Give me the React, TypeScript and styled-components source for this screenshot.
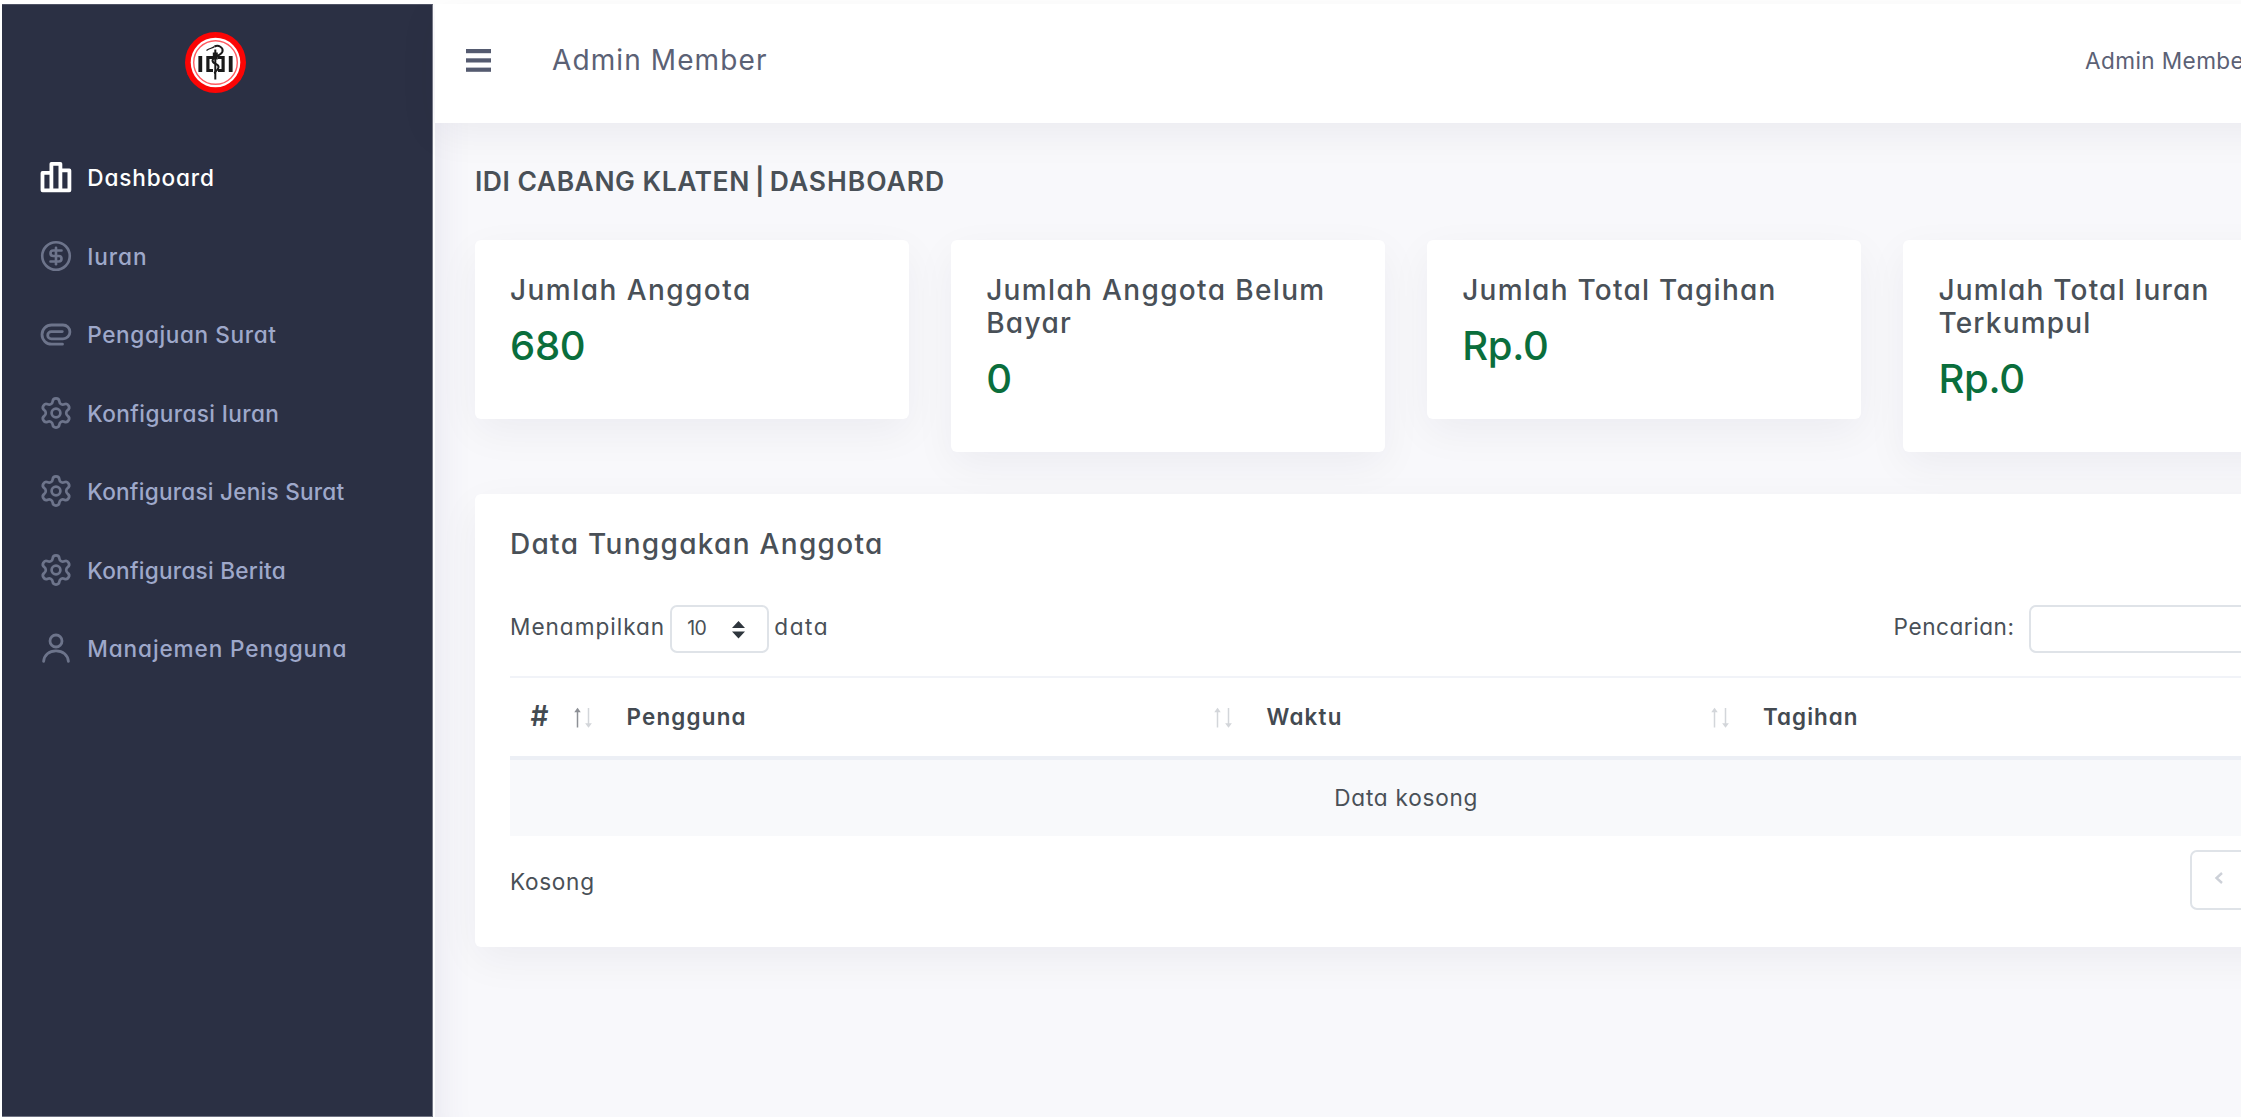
import React from "react";
import styled, { createGlobalStyle } from "styled-components";
import { CircleDollarSign, Settings } from "lucide-react";

const GlobalStyle = createGlobalStyle`
  *, *::before, *::after { box-sizing: border-box; }
  body {
    margin: 0;
    overflow: hidden;
    background: #fff;
    color: #495057;
    font-family: Inter, "Open Sans", sans-serif;
    font-feature-settings: "cv11";
    font-size: 22.6px;
  }
  h1, h2, h3, p { margin: 0; }
`;

const Page = styled.div`
  display: flex;
  width: 2241px;
  height: 1118px;
  padding: 4px 0 1px 2px;
  overflow: hidden;
`;

const Sidebar = styled.aside`
  flex: none;
  width: 431px;
  background: #2b3044;
  border-right: 1px solid #747786;
  border-bottom: 1px solid #6f7282;
  border-top: 1px solid #4f5365;
`;

const Brand = styled.div`
  display: flex;
  justify-content: center;
  height: 134px;
  padding: 27px 3px 0 0;
`;

const Menu = styled.nav`
  display: flex;
  flex-direction: column;
`;

const MenuItem = styled.a<{ $active?: boolean }>`
  display: flex;
  align-items: center;
  gap: 12.3px;
  height: 78.5px;
  padding: 0 0 1px 35px;
  color: ${(p) => (p.$active ? "#ffffff" : "#9ea8ca")};
  font-weight: 500;

  svg {
    flex: none;
    margin-top: -1px;
    color: ${(p) => (p.$active ? "#ffffff" : "#6d748b")};
  }
`;

const Label = styled.span<{ $track: number }>`
  letter-spacing: ${(p) => p.$track}px;
  white-space: nowrap;
`;

const Main = styled.main`
  display: flex;
  flex: none;
  flex-direction: column;
  width: 1945.5px;
  background: #f8f8fb;
  border-left: 2px solid #fdfdfe;
  box-shadow: inset 40px 0 36px -38px rgba(70, 60, 130, 0.1);
`;

const Topbar = styled.header`
  display: flex;
  align-items: center;
  flex: none;
  height: 118.5px;
  padding: 0 128.5px 6px 30.5px;
  background: #fff;
  color: #5b6175;
  box-shadow: 0 10px 42px rgba(18, 22, 50, 0.06);
`;

const TopTitle = styled.div`
  margin-left: 61px;
  font-size: 28px;
  letter-spacing: 1.1px;
  line-height: 36px;
`;

const Profile = styled.div`
  width: 165px;
  margin-left: auto;
  letter-spacing: 0.4px;
  white-space: nowrap;
`;

const Content = styled.div`
  display: flex;
  flex-direction: column;
  padding: 41px 41px 0 40px;
`;

const PageTitle = styled.h1`
  margin-bottom: 42px;
  color: #495057;
  font-size: 26.5px;
  font-weight: 600;
  line-height: 34px;
  white-space: pre;
`;

const TitleDivider = styled.span`
  word-spacing: -1.4px;
`;

const Stats = styled.div`
  display: grid;
  grid-template-columns: repeat(4, 1fr);
  align-items: start;
  gap: 42px;
  margin-bottom: 41.5px;
`;

const Card = styled.section`
  background: #fff;
  border-radius: 6px;
  box-shadow: 0 13px 42px rgba(18, 22, 50, 0.05);
`;

const StatCard = styled(Card)`
  padding: 34px 35px 49px;
`;

const CardTitle = styled.h2<{ $track?: number }>`
  color: #495057;
  font-size: 28px;
  font-weight: 500;
  letter-spacing: ${(p) => p.$track ?? 2}px;
  line-height: 33.6px;
`;

const StatValue = styled.p`
  margin-top: 14.5px;
  color: #0a6e3c;
  font-size: 40px;
  font-weight: 500;
  letter-spacing: -0.3px;
  line-height: 48px;
`;

const TableCard = styled(Card)`
  padding: 34.4px 35px 37.7px;
`;

const Controls = styled.div`
  display: flex;
  align-items: center;
  justify-content: space-between;
  margin: 43px 0 23px;
`;

const Control = styled.label`
  display: flex;
  align-items: center;
  line-height: 28px;

  > span { margin-top: -3px; }
`;

const SelectBox = styled.div`
  display: flex;
  align-items: center;
  justify-content: space-between;
  width: 98.5px;
  height: 48.5px;
  margin: 0 5.5px 0 5px;
  padding: 0 22px 0 15px;
  border: 2px solid #dfe3e8;
  border-radius: 7px;
  font-size: 19.5px;
  letter-spacing: -0.6px;

  > span { margin-top: -2px; }
  > svg { margin-top: 2px; }
`;

const SearchInput = styled.input`
  width: 274px;
  height: 48.5px;
  margin: 0 0 0 14px;
  border: 2.5px solid #dfe3e8;
  border-radius: 7px;
  background: #fff;
`;

const Table = styled.div`
  display: flex;
  flex-direction: column;
`;

const HeadRow = styled.div`
  display: grid;
  grid-template-columns: 96px 640px 496.5px 1fr;
  height: 83.5px;
  border-top: 2px solid #f1f3f8;
  border-bottom: 4px solid #eceff5;
`;

const HeadCell = styled.div<{ $size?: number }>`
  display: flex;
  align-items: center;
  justify-content: space-between;
  padding: 0 13px 0 20.5px;
  color: #434a51;
  font-size: ${(p) => p.$size ?? 22.4}px;
  font-weight: 600;
  line-height: 27px;

  > svg { margin-top: 3px; }
  > span { margin-top: -1px; }
`;

const EmptyRow = styled.div`
  display: flex;
  align-items: center;
  justify-content: center;
  height: 76px;
  background: #f8f9fb;
  letter-spacing: 0.75px;
`;

const Footer = styled.div`
  display: flex;
  align-items: center;
  justify-content: space-between;
  margin-top: 14px;

  > span { margin-top: 4px; }
`;

const Pager = styled.div`
  display: flex;
  height: 60px;
  border: 2px solid #dfe3e8;
  border-radius: 7px;
`;

const PagerButton = styled.button`
  display: flex;
  align-items: center;
  justify-content: center;
  width: 54.5px;
  padding: 0 0 3px;
  border: 0;
  background: none;
  color: #cdd1d8;

  & + & { border-left: 2px solid #dfe3e8; }
`;

function Logo() {
  return (
    <svg width="61" height="61" viewBox="-30.5 -30.5 61 61">
      <circle r="30.5" fill="#fb0505" />
      <circle r="24.8" fill="#fff" />
      <circle r="21.8" fill="none" stroke="#ff5b60" strokeWidth="1.4" />
      <g fill="none" stroke="#1a1a1a">
        <path d="M-15.2-6.5V9.5M15.2-6.5V9.5" strokeWidth="3.8" />
        <path d="M-2.5-5H-7.6V8H-2.5" strokeWidth="3.2" />
        <path d="M2.5-5H7.6V8H2.5" strokeWidth="3.2" />
        <path d="M-.2-13V17" strokeWidth="2" />
        <path d="M-.2-10V-3" strokeWidth="5" />
        <path d="M-9-12C-6-14.5-3-14-1-16" strokeWidth="1.2" />
        <path d="M-1-16C3-18 8-15 7-11S-3-6-3-2 4 1 3 5-2 9-.5 11" strokeWidth="2" />
      </g>
    </svg>
  );
}

function ChartIcon() {
  return (
    <svg width="38" height="38" viewBox="0 0 38 38" fill="none" stroke="currentColor" strokeWidth="3.8" strokeLinejoin="round">
      <path d="M5.5 14.9H14.4V32.3H5.5ZM14.4 5.8H23.4V32.3H14.4ZM23.4 12.4H32.4V32.3H23.4Z" />
    </svg>
  );
}

function ClipIcon() {
  return (
    <svg width="38" height="38" viewBox="0 0 38 38" fill="none" stroke="currentColor" strokeWidth="2.8" strokeLinecap="round">
      <path d="M25.5 29.2H14.6A9.6 9.6 0 0 1 14.6 10H26A6.9 6.9 0 0 1 26 23.8H14.3A3.6 3.6 0 0 1 14.3 16.6H25.3" />
    </svg>
  );
}

function PersonIcon() {
  return (
    <svg width="38" height="38" viewBox="0 0 38 38" fill="none" stroke="currentColor" strokeWidth="2.8" strokeLinecap="round">
      <circle cx="19" cy="12" r="6" />
      <path d="M6.6 32.4C7.2 26 12 21.8 19 21.8S30.8 26 31.4 32.4" />
    </svg>
  );
}

function GearIcon() {
  return <Settings size={38} viewBox="-1 -1 26 26" strokeWidth={1.85} />;
}

function CoinIcon() {
  return <CircleDollarSign size={38} viewBox="-1.8 -1.8 27.6 27.6" strokeWidth={1.9} />;
}

function BurgerIcon() {
  return (
    <svg width="25.5" height="23" viewBox="0 0 25.5 23" fill="#555b70">
      <rect width="25.5" height="4.2" />
      <rect y="9.3" width="25.5" height="4.2" />
      <rect y="18.6" width="25.5" height="4.2" />
    </svg>
  );
}

function SelectArrows() {
  return (
    <svg width="13" height="18" viewBox="0 0 13 18" fill="#2f363d">
      <path d="M6.5 0L13 7H0ZM0 10.5H13L6.5 17.5Z" />
    </svg>
  );
}

function SortArrows({ ascending }: { ascending?: boolean }) {
  return (
    <svg width="20" height="22" viewBox="0 0 20 22" fill="none" stroke="#d3d6da" strokeWidth="1.5">
      <g stroke={ascending ? "#8d9096" : undefined} fill={ascending ? "#5a6067" : "#cdd1d5"}>
        <path d="M4.5 3V20.5" />
        <path d="M4.5 2L6.3 4.6H2.7Z" />
      </g>
      <path d="M15.5 1V19" />
      <path d="M15.5 19.6L17.4 17H13.6Z" fill="#cdd1d5" />
    </svg>
  );
}

function Chevron({ right }: { right?: boolean }) {
  return (
    <svg width="10" height="14" viewBox="0 0 10 14" fill="none" stroke="currentColor" strokeWidth="2.4">
      <path d={right ? "M2 2L7.5 7L2 12" : "M8 2L2.5 7L8 12"} />
    </svg>
  );
}

const menu = [
  { label: "Dashboard", icon: ChartIcon, track: 0.85, active: true },
  { label: "Iuran", icon: CoinIcon, track: 0.9 },
  { label: "Pengajuan Surat", icon: ClipIcon, track: 0.6 },
  { label: "Konfigurasi Iuran", icon: GearIcon, track: 0.38 },
  { label: "Konfigurasi Jenis Surat", icon: GearIcon, track: 0.23 },
  { label: "Konfigurasi Berita", icon: GearIcon, track: 0.25 },
  { label: "Manajemen Pengguna", icon: PersonIcon, track: 0.87 },
];

const stats = [
  { title: "Jumlah Anggota", value: "680", track: 1.45 },
  { title: "Jumlah Anggota Belum Bayar", value: "0", track: 1.35 },
  { title: "Jumlah Total Tagihan", value: "Rp.0", track: 1.25 },
  { title: "Jumlah Total Iuran Terkumpul", value: "Rp.0", track: 1.2 },
];

const columns = [
  { label: "#", track: 0, size: 28 },
  { label: "Pengguna", track: 1.2 },
  { label: "Waktu", track: 1.2 },
  { label: "Tagihan", track: 1.05 },
];

export default function App() {
  return (
    <>
      <GlobalStyle />
      <Page>
        <Sidebar>
          <Brand><Logo /></Brand>
          <Menu>
            {menu.map(({ label, icon: Icon, track, active }) => (
              <MenuItem key={label} $active={active}>
                <Icon />
                <Label $track={track}>{label}</Label>
              </MenuItem>
            ))}
          </Menu>
        </Sidebar>
        <Main>
          <Topbar>
            <BurgerIcon />
            <TopTitle>Admin Member</TopTitle>
            <Profile>Admin Member</Profile>
          </Topbar>
          <Content>
            <PageTitle>
              <Label $track={0.5}>IDI CABANG KLATEN</Label>
              <TitleDivider> | </TitleDivider>
              <Label $track={0.95}>DASHBOARD</Label>
            </PageTitle>
            <Stats>
              {stats.map((s) => (
                <StatCard key={s.title}>
                  <CardTitle $track={s.track}>{s.title}</CardTitle>
                  <StatValue>{s.value}</StatValue>
                </StatCard>
              ))}
            </Stats>
            <TableCard>
              <CardTitle $track={1.3}>Data Tunggakan Anggota</CardTitle>
              <Controls>
                <Control>
                  <Label $track={0.98}>Menampilkan</Label>
                  <SelectBox>
                    <span>10</span>
                    <SelectArrows />
                  </SelectBox>
                  <Label $track={1.6}>data</Label>
                </Control>
                <Control>
                  <Label $track={0.53}>Pencarian:</Label>
                  <SearchInput />
                </Control>
              </Controls>
              <Table>
                <HeadRow>
                  {columns.map((c, i) => (
                    <HeadCell key={c.label} $size={c.size}>
                      <Label $track={c.track}>{c.label}</Label>
                      <SortArrows ascending={i === 0} />
                    </HeadCell>
                  ))}
                </HeadRow>
                <EmptyRow>Data kosong</EmptyRow>
              </Table>
              <Footer>
                <Label $track={0.7}>Kosong</Label>
                <Pager>
                  <PagerButton><Chevron /></PagerButton>
                  <PagerButton><Chevron right /></PagerButton>
                </Pager>
              </Footer>
            </TableCard>
          </Content>
        </Main>
      </Page>
    </>
  );
}
